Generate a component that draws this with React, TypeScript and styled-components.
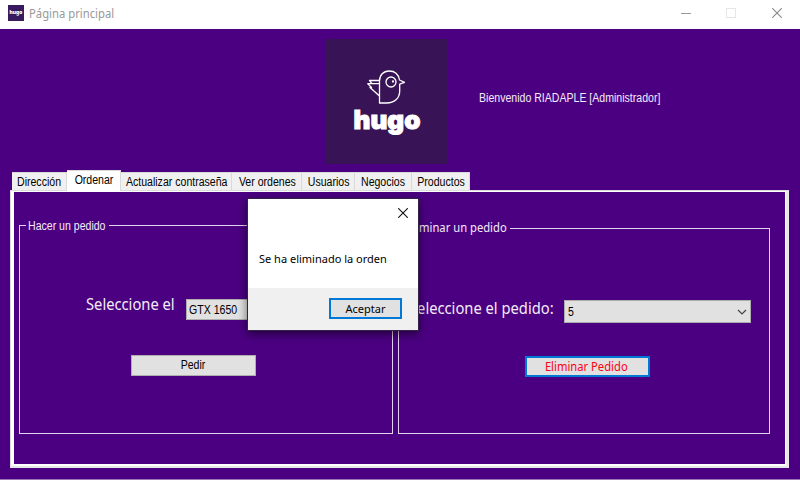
import React from 'react';
import styled, { createGlobalStyle } from 'styled-components';

const sans = '"Liberation Sans", Arial, sans-serif';
const humanist = '"Noto Sans", "Open Sans", sans-serif';
const indigo = '#4b0082';

const GlobalStyle = createGlobalStyle`
  * { box-sizing: border-box; }
  body { margin: 0; overflow: hidden; background: ${indigo}; }
  svg { display: block; }
`;

const Window = styled.div`
  position: relative;
  display: flex;
  flex-direction: column;
  width: 800px;
  height: 480px;
  background: ${indigo};
  border-bottom: 1px solid #9a78b8;
  font: 12px/14px ${sans};
  white-space: nowrap;
`;

const Label = styled.span<{ $squeeze?: number; $centered?: boolean }>`
  display: inline-block;
  transform: scaleX(${(p) => p.$squeeze ?? 0.88});
  transform-origin: ${(p) => (p.$centered ? 'center' : 'left')};
`;

const TitleBar = styled.header`
  display: flex;
  height: 29px;
  padding: 5px 18px 0 8px;
  background: #fff;
`;

const AppIcon = styled.div`
  width: 16px;
  height: 16px;
  background: #381a5e;
  color: #fff;
  font: 900 5px/15px Inter, sans-serif;
  text-align: center;
`;

const Title = styled.div`
  margin-left: 5px;
  flex: 1;
  color: #999;
  font: 12px/18px ${humanist};
`;

const WindowControls = styled.div`
  display: grid;
  grid-template-columns: 45px 46px 10px;
  padding-top: 3px;
`;

const Hero = styled.section`
  display: flex;
  height: 141px;
  padding: 10px 0 0 326px;
`;

const Logo = styled.div`
  display: flex;
  flex-direction: column;
  align-items: center;
  width: 122px;
  height: 125px;
  padding-top: 30px;
  background: #381456;
`;

const Wordmark = styled.div`
  color: #fff;
  font: 900 26px/30px Inter, sans-serif;
  -webkit-text-stroke: 1px #fff;
`;

const Welcome = styled.div`
  margin: 52px 0 0 31px;
  color: #f2ecf7;
`;

const TabStrip = styled.nav`
  display: flex;
  align-items: flex-end;
  height: 20px;
  padding-left: 12px;
`;

const Tab = styled.div<{ $width: number; $active?: boolean }>`
  display: flex;
  justify-content: center;
  width: ${(p) => p.$width}px;
  height: ${(p) => (p.$active ? 21 : 18)}px;
  margin-bottom: ${(p) => (p.$active ? -1 : 0)}px;
  padding: 2px 0 0 1px;
  background: ${(p) => (p.$active ? '#fff' : '#f0f0f0')};
  border: solid #d9d9d9;
  border-width: 1px 1px 0 0;
  color: #000;
  z-index: ${(p) => (p.$active ? 1 : 0)};
`;

const TabFrame = styled.main`
  width: 779px;
  height: 278px;
  margin-left: 10px;
  border: solid;
  border-width: 1px 3px 2px 1px;
  border-color: #dcdcdc #e9e9e9 #e6e6e6 #dcdcdc;
`;

const TabPage = styled.div`
  display: flex;
  align-items: flex-end;
  gap: 5px;
  height: 275px;
  padding: 0 15px 30px 5px;
  border: solid #fff;
  border-width: 1px 1px 2px 3px;
`;

const Group = styled.fieldset<{ $width: number; $height: number }>`
  display: flex;
  flex-direction: column;
  width: ${(p) => p.$width}px;
  height: ${(p) => p.$height}px;
  min-width: 0;
  margin: 0;
  padding: 0;
  border: 1px solid #e3d3ee;
  color: #f2ecf7;
`;

const Legend = styled.legend<{ $width: number }>`
  width: ${(p) => p.$width}px;
  height: 14px;
  margin-left: 6px;
  padding: 0 2px;
  line-height: 16px;
`;

const DeleteLegend = styled(Legend)`
  font: 12px/14px ${humanist};
`;

const FieldRow = styled.div<{ $left: number; $top: number }>`
  display: flex;
  margin: ${(p) => p.$top}px 0 0 ${(p) => p.$left}px;
`;

const FieldLabel = styled.label<{ $width: number; $raise: number }>`
  flex: none;
  width: ${(p) => p.$width}px;
  margin-top: -${(p) => p.$raise}px;
  font: 16px/20px ${humanist};
`;

const Combo = styled.div<{ $width: number; $height: number }>`
  display: flex;
  align-items: center;
  justify-content: space-between;
  width: ${(p) => p.$width}px;
  height: ${(p) => p.$height}px;
  padding: 0 3px 0 2px;
  background: #e1e1e1;
  border: 1px solid #adadad;
  color: #000;
`;

const OrderCombo = styled(Combo)`
  padding-left: 3px;
  font-size: 12px;
`;

const Button = styled.button<{ $width: number; $focused?: boolean }>`
  width: ${(p) => p.$width}px;
  height: 21px;
  padding: 0;
  background: #e1e1e1;
  border: ${(p) => (p.$focused ? '2px solid #0078d7' : '1px solid #adadad')};
  color: #000;
  font: 12px/17px ${sans};
`;

const OrderButton = styled(Button)`
  margin: 35px 0 0 111px;
`;

const DeleteButton = styled(Button)`
  margin: 33px 0 0 126px;
  padding-right: 2px;
  color: #ff0014;
  font: 12px/17px ${humanist};
`;

const Dialog = styled.div`
  position: absolute;
  left: 247px;
  top: 198px;
  display: flex;
  flex-direction: column;
  width: 172px;
  height: 133px;
  background: #fff;
  border: 1px solid #35204a;
  box-shadow: 0 3px 9px rgba(0, 0, 0, 0.55);
  color: #000;
  z-index: 5;
  font: 11px/14px ${humanist};
`;

const DialogHeader = styled.div`
  display: flex;
  justify-content: flex-end;
  padding: 9px 10px 0 0;
`;

const DialogMessage = styled.div`
  flex: 1;
  padding: 34px 0 0 11px;
`;

const DialogFooter = styled.div`
  display: flex;
  justify-content: flex-end;
  height: 42px;
  padding: 10px 16px 0 0;
  background: #f0f0f0;
`;

const DialogButton = styled(Button)`
  font: 11px/17px ${humanist};
`;

const tabs = [
  { name: 'Dirección', width: 55 },
  { name: 'Ordenar', width: 54, active: true },
  { name: 'Actualizar contraseña', width: 111 },
  { name: 'Ver ordenes', width: 70 },
  { name: 'Usuarios', width: 53 },
  { name: 'Negocios', width: 57 },
  { name: 'Productos', width: 58 },
];

const Cross = ({ color }: { color: string }) => (
  <svg width="10" height="10" viewBox="0 0 10 10" stroke={color} strokeWidth="1.1">
    <path d="M0.2 0.2 9.8 9.8M9.8 0.2 0.2 9.8" />
  </svg>
);

const Bird = () => (
  <svg width="40" height="36" viewBox="0 0 40 36" fill="none" stroke="#fff" strokeWidth="1.3" strokeLinejoin="round">
    <path d="M12.500 34V12C12.500 6 16.500 2 22 2c5.500 0 9.500 3.500 10.500 9l5 2.300-4.800 1.900v6.800c0 7.500-5.500 12-13 12z" />
    <circle cx="24" cy="13" r="5" />
    <path d="M12.500 11.500H2.500L5 14.700H0.800L4.500 18.500H3L12.500 27M5 14.700h7.500" />
    <circle cx="26" cy="12.500" r="0.500" />
  </svg>
);

export default function App() {
  return (
    <>
      <GlobalStyle />
      <Window>
        <TitleBar>
          <AppIcon>hugo</AppIcon>
          <Title><Label $squeeze={0.94}>Página principal</Label></Title>
          <WindowControls>
            <svg width="10" height="10" shapeRendering="crispEdges"><path d="M0 5.500H10" stroke="#999" /></svg>
            <svg width="10" height="10" shapeRendering="crispEdges"><rect x="0.500" y="0.500" width="9" height="9" fill="none" stroke="#e6e6e6" /></svg>
            <Cross color="#888" />
          </WindowControls>
        </TitleBar>
        <Hero>
          <Logo>
            <Bird />
            <Wordmark>hugo</Wordmark>
          </Logo>
          <Welcome><Label>Bienvenido RIADAPLE [Administrador]</Label></Welcome>
        </Hero>
        <TabStrip>
          {tabs.map((t) => (
            <Tab key={t.name} $width={t.width} $active={t.active}>
              <Label $centered>{t.name}</Label>
            </Tab>
          ))}
        </TabStrip>
        <TabFrame>
          <TabPage>
            <Group $width={374} $height={216}>
              <Legend $width={83}><Label>Hacer un pedido</Label></Legend>
              <FieldRow $left={66} $top={67}>
                <FieldLabel $width={100} $raise={5}><Label $squeeze={0.92}>Seleccione el</Label></FieldLabel>
                <Combo $width={140} $height={21}><Label>GTX 1650</Label></Combo>
              </FieldRow>
              <OrderButton $width={125}><Label $centered>Pedir</Label></OrderButton>
            </Group>
            <Group $width={372} $height={213}>
              <DeleteLegend $width={105}><Label $squeeze={0.935}>Eliminar un pedido</Label></DeleteLegend>
              <FieldRow $left={10} $top={65}>
                <FieldLabel $width={155} $raise={2}><Label $squeeze={0.92}>Seleccione el pedido:</Label></FieldLabel>
                <OrderCombo $width={187} $height={23}>
                  <Label>5</Label>
                  <svg width="10" height="6" viewBox="0 0 10 6" fill="none" stroke="#444" strokeWidth="1.2"><path d="M1 1l4 4 4-4" /></svg>
                </OrderCombo>
              </FieldRow>
              <DeleteButton $width={125} $focused><Label $squeeze={0.935} $centered>Eliminar Pedido</Label></DeleteButton>
            </Group>
          </TabPage>
        </TabFrame>
        <Dialog>
          <DialogHeader><Cross color="#111" /></DialogHeader>
          <DialogMessage>Se ha eliminado la orden</DialogMessage>
          <DialogFooter>
            <DialogButton $width={73} $focused>Aceptar</DialogButton>
          </DialogFooter>
        </Dialog>
      </Window>
    </>
  );
}
